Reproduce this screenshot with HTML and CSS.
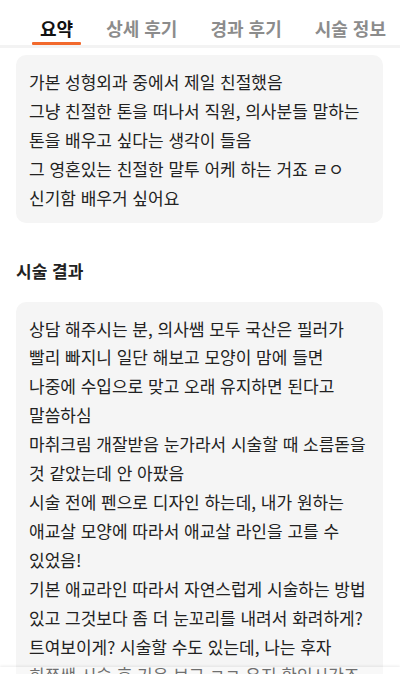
FILE: index.html
```html
<!DOCTYPE html>
<html lang="ko">
<head>
<meta charset="utf-8">
<title>후기</title>
<link rel="stylesheet" href="styles.css">
</head>
<body>
<nav class="tabs">
  <div class="tab active">요약</div>
  <div class="tab">상세 후기</div>
  <div class="tab">경과 후기</div>
  <div class="tab">시술 정보</div>
</nav>
<main class="content">
  <div class="card">
    가본 성형외과 중에서 제일 친절했음<br>
    그냥 친절한 톤을 떠나서 직원, 의사분들 말하는<br>
    톤을 배우고 싶다는 생각이 들음<br>
    그 영혼있는 친절한 말투 어케 하는 거죠 ㄹㅇ<br>
    신기함 배우거 싶어요
  </div>
  <h2 class="section-title">시술 결과</h2>
  <div class="card">
    상담 해주시는 분, 의사쌤 모두 국산은 필러가<br>
    빨리 빠지니 일단 해보고 모양이 맘에 들면<br>
    나중에 수입으로 맞고 오래 유지하면 된다고<br>
    말씀하심<br>
    마취크림 개잘받음 눈가라서 시술할 때 소름돋을<br>
    것 같았는데 안 아팠음<br>
    시술 전에 펜으로 디자인 하는데, 내가 원하는<br>
    애교살 모양에 따라서 애교살 라인을 고를 수<br>
    있었음!<br>
    기본 애교라인 따라서 자연스럽게 시술하는 방법<br>
    있고 그것보다 좀 더 눈꼬리를 내려서 화려하게?<br>
    트여보이게? 시술할 수도 있는데, 나는 후자<br>
    희쭈쌤 시술 후 기운 보고 ㅋㅋ 유지 확인시간죠
  </div>
</main>
<div class="bottom-edge"></div>
</body>
</html>
```

FILE: styles.css
```css
html, body {
  margin: 0;
  padding: 0;
  background: #ffffff;
}
body {
  font-family: "Noto Sans CJK KR", "Noto Sans", sans-serif;
  color: #222222;
  width: 400px;
  height: 674px;
  overflow: hidden;
}
.tabs {
  display: flex;
  gap: 17px;
  padding-left: 32px;
  height: 45px;
  border-bottom: 3px solid #f3f3f3;
  background: #ffffff;
}
.tab {
  position: relative;
  display: flex;
  align-items: center;
  padding: 10px 8px 0;
  font-size: 18px;
  font-weight: 700;
  color: #8c8c8c;
  white-space: nowrap;
}
.tab.active {
  color: #111111;
}
.tab.active::after {
  content: "";
  position: absolute;
  left: 0;
  right: 0;
  bottom: 0;
  height: 3px;
  background: #f2692c;
  border-radius: 1px;
}
.content {
  padding: 7px 17px 0 16px;
}
.card {
  background: #f5f5f5;
  border-radius: 10px;
  padding: 13px 13px 10px;
  font-size: 17px;
  line-height: 28.9px;
  color: #222222;
  white-space: nowrap;
}
.section-title {
  margin: 36px 0 19px;
  font-size: 17px;
  line-height: 24px;
  font-weight: 700;
  color: #222222;
}
.bottom-edge {
  position: fixed;
  left: 0;
  right: 0;
  top: 667px;
  height: 7px;
  background: rgba(255, 255, 255, 0.35);
  box-shadow: 0 -1px 3px rgba(0, 0, 0, 0.08);
}
```
